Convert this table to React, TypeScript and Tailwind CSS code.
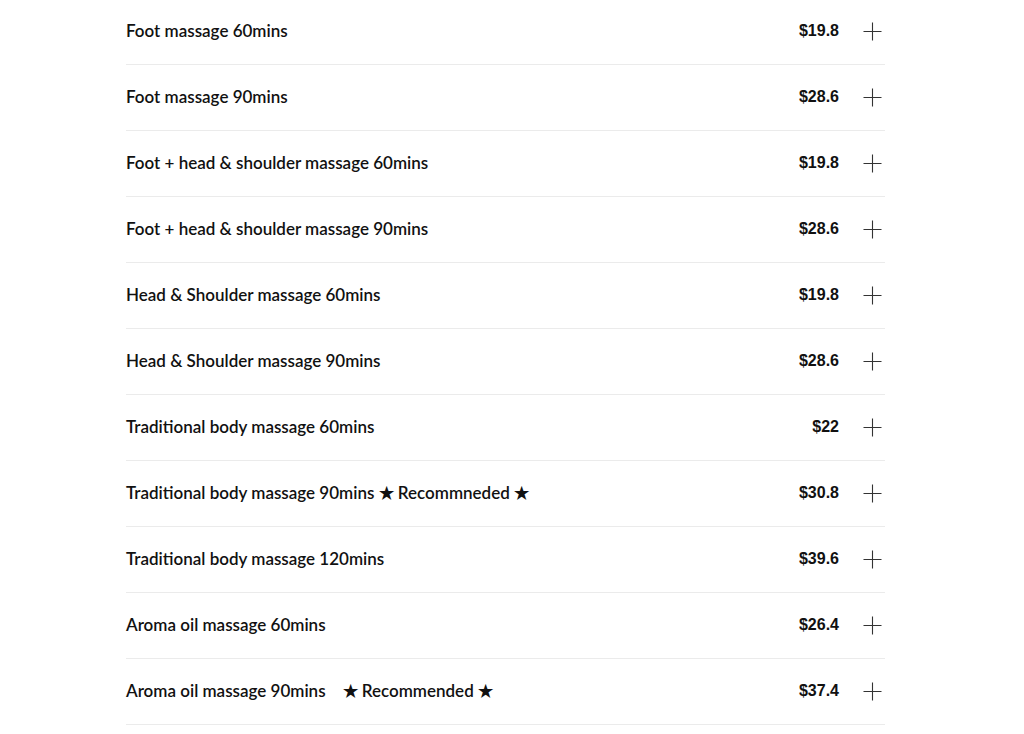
const items: { name: string; price: string }[] = [
  { name: "Foot massage 60mins", price: "$19.8" },
  { name: "Foot massage 90mins", price: "$28.6" },
  { name: "Foot + head & shoulder massage 60mins", price: "$19.8" },
  { name: "Foot + head & shoulder massage 90mins", price: "$28.6" },
  { name: "Head & Shoulder massage 60mins", price: "$19.8" },
  { name: "Head & Shoulder massage 90mins", price: "$28.6" },
  { name: "Traditional body massage 60mins", price: "$22" },
  { name: "Traditional body massage 90mins ★ Recommneded ★", price: "$30.8" },
  { name: "Traditional body massage 120mins", price: "$39.6" },
  { name: "Aroma oil massage 60mins", price: "$26.4" },
  { name: "Aroma oil massage 90mins \u00a0\u00a0 ★ Recommended ★", price: "$37.4" },
];

function PlusIcon() {
  return (
    <svg width="19" height="19" viewBox="0 0 19 19" className="text-[#333]">
      <path d="M9.5 0.5v18M0.5 9.5h18" stroke="currentColor" strokeWidth="1.1" fill="none" />
    </svg>
  );
}

export default function App() {
  return (
    <div className="min-h-screen bg-white">
      <ul className="ml-[126px] w-[759px] -mt-[1px]">
        {items.map((it, i) => (
          <li
            key={i}
            className="flex items-center h-[66px] border-b border-[#ebebeb] text-[#111]"
          >
            <span className="flex-1 mb-[2px] whitespace-pre font-['Lato',sans-serif] font-semibold text-[17px]">
              {it.name}
            </span>
            <span className="mb-[2px] font-['Liberation_Sans',Arial,sans-serif] font-bold text-[16px]">
              {it.price}
            </span>
            <span className="ml-[24px] mr-[3px] flex items-center">
              <PlusIcon />
            </span>
          </li>
        ))}
      </ul>
    </div>
  );
}
